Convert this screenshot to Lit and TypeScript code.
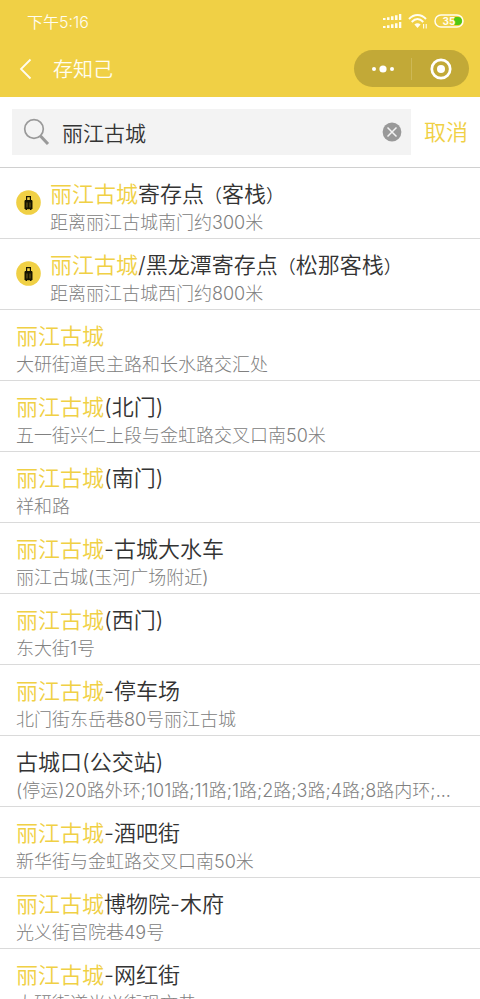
import { LitElement, html, css, nothing } from "lit";
import { customElement, property, state } from "lit/decorators.js";

interface Place {
  name: string;
  detail: string;
  storage?: boolean;
}

const KEYWORD = "丽江古城";

const PLACES: Place[] = [
  { name: "丽江古城寄存点（客栈）", detail: "距离丽江古城南门约300米", storage: true },
  { name: "丽江古城/黑龙潭寄存点（松那客栈）", detail: "距离丽江古城西门约800米", storage: true },
  { name: "丽江古城", detail: "大研街道民主路和长水路交汇处" },
  { name: "丽江古城(北门)", detail: "五一街兴仁上段与金虹路交叉口南50米" },
  { name: "丽江古城(南门)", detail: "祥和路" },
  { name: "丽江古城-古城大水车", detail: "丽江古城(玉河广场附近)" },
  { name: "丽江古城(西门)", detail: "东大街1号" },
  { name: "丽江古城-停车场", detail: "北门街东岳巷80号丽江古城" },
  { name: "古城口(公交站)", detail: "(停运)20路外环;101路;11路;1路;2路;3路;4路;8路内环;..." },
  { name: "丽江古城-酒吧街", detail: "新华街与金虹路交叉口南50米" },
  { name: "丽江古城博物院-木府", detail: "光义街官院巷49号" },
  { name: "丽江古城-网红街", detail: "大研街道光义街现文巷" },
];

@customElement("status-bar")
export class StatusBar extends LitElement {
  static styles = css`
    :host {
      display: flex;
      align-items: center;
      justify-content: space-between;
      height: 42px;
      padding: 0 15px 0 27px;
      font-size: 15px;
      color: #fffdf0;
    }
    .time {
      font-size: 16px;
    }
    .icons {
      display: flex;
      align-items: center;
      gap: 6px;
    }
    svg {
      display: block;
    }
    .charge {
      font: 700 10px "Inter", sans-serif;
    }
  `;

  render() {
    return html`
      <span class="time">下午5:16</span>
      <div class="icons">
        <svg width="20" height="15" viewBox="0 0 20 15" fill="currentColor" aria-hidden="true">
          <path d="M1 4h2.500v2H1zM5 3.200h2.500V6H5zM9 2.200h2.500V6H9zM13 1.200h2.500V6H13zM17 0h2.300v6H17z" />
          <path d="M1 12h2.500v2H1zM5 11.200h2.500V14H5zM9 10.200h2.500V14H9zM13 9.200h2.500V14H13zM17 8h2.300v6H17z" />
        </svg>
        <svg width="20" height="15" viewBox="0 0 20 15" fill="none" stroke="currentColor" aria-hidden="true">
          <path d="M1 5C6-.4 13-.4 18 5" stroke-width="1.900" />
          <path d="M3.700 8C7.500 4.200 11.500 4.200 15.300 8" stroke-width="1.900" />
          <path d="M6.400 10.600C8.500 8.800 10.500 8.800 12.600 10.600L9.500 14z" fill="currentColor" stroke="none" />
          <path d="M15.600 10v4.500M18.200 10v4.500" stroke-width="1.100" />
        </svg>
        <svg width="31" height="14" viewBox="0 0 31 14" role="img" aria-label="电量">
          <path d="M20 3h4a4 4 0 0 1 0 8h-4z" fill="#50c814" />
          <rect x="1" y="1" width="28" height="12" rx="6" fill="none" stroke="currentColor" stroke-width="1.500" />
          <text class="charge" x="15" y="11" text-anchor="middle" fill="currentColor">35</text>
        </svg>
      </div>
    `;
  }
}

@customElement("nav-bar")
export class NavBar extends LitElement {
  static styles = css`
    :host {
      display: flex;
      align-items: center;
      height: 53px;
      padding: 0 11px 2px 16px;
      color: #fffdf0;
    }
    button {
      display: grid;
      place-items: center;
      padding: 0;
      border: 0;
      background: none;
      color: inherit;
    }
    h1 {
      flex: 1;
      margin: 0 0 0 17px;
      font-size: 20px;
      font-weight: inherit;
    }
    .capsule {
      display: flex;
      align-items: center;
      width: 115px;
      height: 37px;
      border-radius: 19px;
      background: #c2a937;
      color: #fff;
    }
    .capsule button {
      flex: 1;
      height: 100%;
    }
    .divider {
      width: 1px;
      height: 22px;
      background: #cdb855;
    }
  `;

  render() {
    return html`
      <button aria-label="返回">
        <svg width="20" height="24" viewBox="0 0 20 24" fill="none" stroke="currentColor" stroke-width="1.800">
          <path d="M14.500 2.500L5 12l9.500 9.500" />
        </svg>
      </button>
      <h1>存知己</h1>
      <div class="capsule">
        <button aria-label="更多">
          <svg width="24" height="10" viewBox="0 0 24 10" fill="currentColor">
            <circle cx="3" cy="5" r="2" />
            <circle cx="12" cy="5" r="3.600" />
            <circle cx="21" cy="5" r="2" />
          </svg>
        </button>
        <span class="divider"></span>
        <button aria-label="关闭">
          <svg width="24" height="24" viewBox="0 0 24 24">
            <circle cx="12" cy="12" r="9.200" fill="none" stroke="currentColor" stroke-width="2.700" />
            <circle cx="12" cy="12" r="4" fill="currentColor" />
          </svg>
        </button>
      </div>
    `;
  }
}

@customElement("place-item")
export class PlaceItem extends LitElement {
  @property({ attribute: false }) place!: Place;

  static styles = css`
    :host {
      display: block;
      border-bottom: 1px solid #dadada;
    }
    a {
      display: flex;
      align-items: center;
      gap: 9px;
      padding: 11px 16px 1px;
      color: #333;
      text-decoration: none;
    }
    svg {
      flex: none;
      margin-bottom: 12px;
    }
    .text {
      flex: 1;
      min-width: 0;
    }
    .name,
    .detail {
      overflow: hidden;
      white-space: nowrap;
      text-overflow: ellipsis;
    }
    .name {
      font-size: 22px;
      line-height: 30px;
    }
    .hit {
      color: #f0d045;
    }
    .paren {
      font-size: 18px;
      line-height: 1;
    }
    .detail {
      font-size: 18px;
      line-height: 28px;
      font-weight: 300;
      color: #808080;
    }
  `;

  private renderName(name: string) {
    const matched = name.startsWith(KEYWORD);
    const rest = matched ? name.slice(KEYWORD.length) : name;
    return html`${matched ? html`<span class="hit">${KEYWORD}</span>` : nothing}${rest
      .split(/([（）])/)
      .map((part) => (/[（）]/.test(part) ? html`<span class="paren">${part}</span>` : part))}`;
  }

  render() {
    const { name, detail, storage } = this.place;
    return html`
      <a href="#">
        ${storage
          ? html`<svg width="25" height="25" viewBox="0 0 25 25" aria-hidden="true">
              <circle cx="12.500" cy="12.500" r="12.300" fill="#f0d045" />
              <path
                d="M10 6h5v4h1l.5 1v8h-1v1H14v-.8h-3v.8H9.500v-1h-1v-8l.5-1h1zM11.200 7.200V10h2.600V7.200z"
                fill="#141200"
                fill-rule="evenodd"
              />
              <path d="M11 12.500v5M14 12.500v5" stroke="#8a7724" stroke-width=".8" />
            </svg>`
          : nothing}
        <div class="text">
          <div class="name">${this.renderName(name)}</div>
          <div class="detail">${detail}</div>
        </div>
      </a>
    `;
  }
}

@customElement("app-root")
export class AppRoot extends LitElement {
  @state() private query = KEYWORD;

  static styles = css`
    :host {
      display: flex;
      flex-direction: column;
      height: 100vh;
      overflow: hidden;
      background: #fff;
      font-family: "Inter", "Noto Sans CJK SC", sans-serif;
      font-weight: 350;
    }
    header {
      flex: none;
      background: #f0d045;
    }
    form {
      flex: none;
      display: flex;
      align-items: center;
      gap: 13px;
      padding: 12px;
      border-bottom: 1px solid #d0d0d0;
    }
    .box {
      flex: 1;
      min-width: 0;
      display: flex;
      align-items: center;
      height: 46px;
      padding: 0 9px 0 11px;
      gap: 12px;
      background: #f3f3f3;
    }
    .box svg {
      display: block;
      flex: none;
    }
    input {
      flex: 1;
      min-width: 0;
      padding: 0;
      border: 0;
      outline: 0;
      background: none;
      font: inherit;
      font-size: 21px;
      color: #333;
    }
    button {
      padding: 0;
      border: 0;
      background: none;
      font: inherit;
    }
    .cancel {
      font-size: 22px;
      line-height: 30px;
      color: #f0d045;
    }
    ul {
      flex: 1;
      min-height: 0;
      margin: 0;
      padding: 0;
      list-style: none;
      overflow-y: auto;
      scrollbar-width: none;
    }
  `;

  render() {
    return html`
      <header>
        <status-bar></status-bar>
        <nav-bar></nav-bar>
      </header>
      <form @submit=${(e: Event) => e.preventDefault()}>
        <div class="box">
          <svg width="27" height="28" viewBox="0 0 27 28" fill="none" stroke="#999" aria-hidden="true">
            <circle cx="11" cy="11" r="9.300" stroke-width="1.700" />
            <path d="M17.500 18l7.500 8" stroke-width="3" />
          </svg>
          <input
            type="text"
            aria-label="搜索地点"
            .value=${this.query}
            @input=${(e: Event) => (this.query = (e.target as HTMLInputElement).value)}
          />
          <button type="button" aria-label="清空" @click=${() => (this.query = "")}>
            <svg width="20" height="20" viewBox="0 0 20 20">
              <circle cx="10" cy="10" r="9.400" fill="#999" />
              <path d="M5.500 5.500l9 9M14.500 5.500l-9 9" stroke="#f3f3f3" stroke-width="1.500" />
            </svg>
          </button>
        </div>
        <button type="button" class="cancel">取消</button>
      </form>
      <ul>
        ${PLACES.map((place) => html`<li><place-item .place=${place}></place-item></li>`)}
      </ul>
    `;
  }
}
